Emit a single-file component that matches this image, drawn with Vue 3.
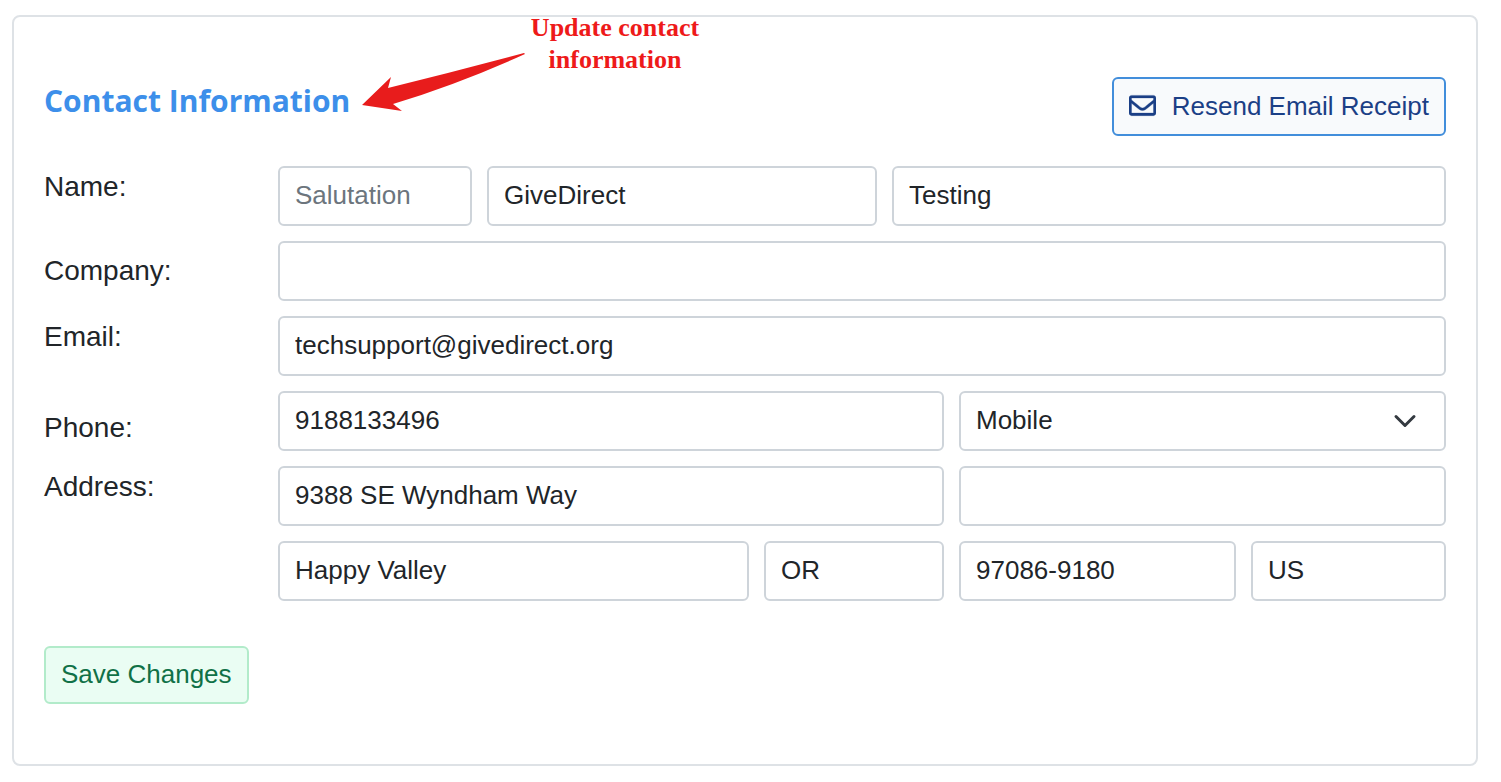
<script setup>
import { ref } from 'vue'

const contact = ref({
  salutation: '',
  first: 'GiveDirect',
  last: 'Testing',
  company: '',
  email: 'techsupport@givedirect.org',
  phone: '9188133496',
  phoneType: 'Mobile',
  street: '9388 SE Wyndham Way',
  unit: '',
  city: 'Happy Valley',
  state: 'OR',
  zip: '97086-9180',
  country: 'US',
})
</script>

<template>
  <main class="page">
    <form class="card" @submit.prevent>
      <header class="head">
        <h2 class="title">Contact Information</h2>
        <button type="button" class="btn btn-resend">
          <svg class="envelope" viewBox="0 0 512 512" aria-hidden="true">
            <path
              fill="currentColor"
              stroke="currentColor"
              stroke-width="6"
              d="M464 64H48C21.490 64 0 85.490 0 112v288c0 26.510 21.490 48 48 48h416c26.510 0 48-21.490 48-48V112c0-26.510-21.490-48-48-48zm0 48v40.805c-22.422 18.259-58.168 46.651-134.587 106.490-16.841 13.247-50.201 45.072-73.413 44.701-23.208.375-56.579-31.459-73.413-44.701C106.180 199.465 70.425 171.067 48 152.805V112h416zM48 400V214.398c22.914 18.251 55.409 43.862 104.938 82.646 21.857 17.205 60.134 55.186 103.062 54.955 42.717.231 80.509-37.199 103.053-54.947 49.528-38.783 82.032-64.401 104.947-82.653V400H48z"
            />
          </svg>
          <span>Resend Email Receipt</span>
        </button>
      </header>

      <div class="rows">
        <div class="row">
          <label class="label" for="first">Name:</label>
          <div class="fields name">
            <input v-model="contact.salutation" class="field" placeholder="Salutation" aria-label="Salutation" />
            <input id="first" v-model="contact.first" class="field" />
            <input v-model="contact.last" class="field" aria-label="Last name" />
          </div>
        </div>
        <div class="row">
          <label class="label middle" for="company">Company:</label>
          <div class="fields">
            <input id="company" v-model="contact.company" class="field" />
          </div>
        </div>
        <div class="row">
          <label class="label" for="email">Email:</label>
          <div class="fields">
            <input id="email" v-model="contact.email" class="field" type="email" />
          </div>
        </div>
        <div class="row">
          <label class="label low" for="phone">Phone:</label>
          <div class="fields halves">
            <input id="phone" v-model="contact.phone" class="field" type="tel" />
            <div class="select-wrap">
              <select v-model="contact.phoneType" class="field select" aria-label="Phone type">
                <option>Mobile</option>
                <option>Home</option>
                <option>Work</option>
              </select>
              <svg class="chevron" viewBox="0 0 16 16" aria-hidden="true">
                <path d="m2 5 6 6 6-6" fill="none" stroke="#343a40" stroke-width="2" stroke-linecap="round" stroke-linejoin="round" />
              </svg>
            </div>
          </div>
        </div>
        <div class="row">
          <label class="label" for="street">Address:</label>
          <div class="address">
            <div class="fields halves">
              <input id="street" v-model="contact.street" class="field" />
              <input v-model="contact.unit" class="field" aria-label="Address line 2" />
            </div>
            <div class="fields city">
              <input v-model="contact.city" class="field" aria-label="City" />
              <input v-model="contact.state" class="field" aria-label="State" />
              <input v-model="contact.zip" class="field" aria-label="Zip code" />
              <input v-model="contact.country" class="field" aria-label="Country" />
            </div>
          </div>
        </div>
      </div>

      <button type="submit" class="btn btn-save">Save Changes</button>

      <svg class="arrow" viewBox="0 0 164 60" aria-hidden="true">
        <path d="M0 53 29 25 26 36Q95 19 162 1L163 2Q97 32 31 52L40 59Z" fill="#e81c1c" />
      </svg>
      <p class="note">Update contact<br />information</p>
    </form>
  </main>
</template>

<style>
body {
  margin: 0;
  background: #fff;
}
</style>

<style scoped>
.page {
  padding: 15px 23px 16px 12px;
  font-family: "Liberation Sans", Arial, sans-serif;
  color: #212529;
}
.card {
  position: relative;
  padding: 60px 30px;
  border: 2px solid #dee2e6;
  border-radius: 8px;
}
.head {
  display: flex;
  justify-content: space-between;
  align-items: flex-start;
  margin-bottom: 30px;
}
.title {
  margin: 0;
  font: 700 30px/48px "Open Sans", "Noto Sans", sans-serif;
  color: #3d8fea;
}
.btn {
  display: flex;
  align-items: center;
  box-sizing: border-box;
  height: 58px;
  padding: 0 15px 2px;
  border: 2px solid;
  border-radius: 6px;
  font: 26px/40px "Liberation Sans", Arial, sans-serif;
}
.btn-resend {
  gap: 16px;
  height: 59px;
  background: #f8fafc;
  border-color: #428edb;
  color: #1b3f86;
}
.envelope {
  width: 27px;
  height: 27px;
}
.btn-save {
  margin-top: 45px;
  background: #eafdf3;
  border-color: #b2ebca;
  color: #107147;
}
.rows,
.address {
  display: grid;
  gap: 15px;
}
.row {
  display: grid;
  grid-template-columns: 234px minmax(0, 1fr);
  align-items: start;
}
.label {
  font-size: 28px;
  line-height: 42px;
}
.middle {
  align-self: center;
}
.low {
  padding-top: 16px;
}
.fields {
  display: grid;
  gap: 15px;
}
.name {
  grid-template-columns: 194fr 390fr 554fr;
}
.halves {
  grid-template-columns: 666fr 487fr;
}
.city {
  grid-template-columns: 471fr 180fr 277fr 195fr;
}
.field {
  box-sizing: border-box;
  width: 100%;
  min-width: 0;
  height: 60px;
  margin: 0;
  padding: 0 15px 2px;
  border: 2px solid #ced4da;
  border-radius: 6px;
  background: #fff;
  color: #212529;
  font: 26px/40px "Liberation Sans", Arial, sans-serif;
}
.field::placeholder {
  color: #6c757d;
  opacity: 1;
}
.select-wrap {
  position: relative;
}
.select {
  appearance: none;
}
.chevron {
  position: absolute;
  top: 18px;
  right: 29px;
  width: 24px;
  height: 24px;
  pointer-events: none;
}
.arrow {
  position: absolute;
  top: 35px;
  left: 348px;
  width: 164px;
  height: 60px;
}
.note {
  position: absolute;
  top: -5px;
  left: 511px;
  width: 180px;
  margin: 0;
  font: 700 26px/32px "Liberation Serif", "Times New Roman", serif;
  text-align: center;
  color: #ee1a1a;
}
</style>
